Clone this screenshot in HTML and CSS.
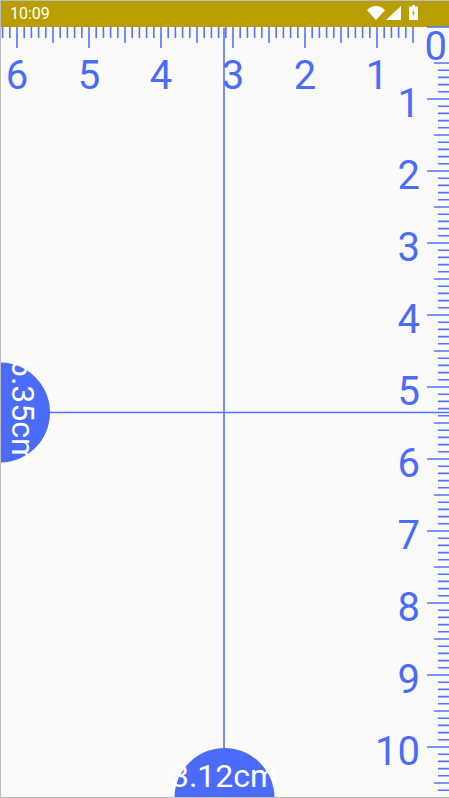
FILE: index.html
```html
<!DOCTYPE html>
<html lang="en">
<head>
<meta charset="utf-8">
<title>Ruler</title>
<link rel="stylesheet" href="styles.css">
</head>
<body>
<div class="frame">
  <header class="statusbar">
    <span class="clock">10:09</span>
    <div class="status-icons">
      <svg class="icon-wifi" viewBox="0 0 18 14"><path d="M0 4.200C2.400 1.600 5.500 0 9 0s6.600 1.600 9 4.200L9 14z"/></svg>
      <svg class="icon-signal" viewBox="0 0 15 14"><path d="M15 0v14H0z"/></svg>
      <svg class="icon-battery" viewBox="0 0 9 15"><path d="M3 0h3v1.500h3V15H0V1.500h3z"/><path class="bolt" d="M5 4 3 8.500h1.400L4 12l2-4.500H4.600z"/></svg>
    </div>
  </header>
  <svg class="stage" viewBox="1 27 448 770">
    <path id="ticks-minor" class="tick"/>
    <path id="ticks-major" class="tick"/>
    <line class="guide" x1="224" y1="28" x2="224" y2="748"/>
    <line class="guide" x1="50" y1="412.500" x2="449" y2="412.500"/>
    <circle class="knob" cx="0" cy="412.500" r="50"/>
    <circle class="knob" cx="224.500" cy="798" r="50"/>
    <text class="knob-label" transform="translate(12 412.500) rotate(90)">6.35cm</text>
    <text class="knob-label" x="224.500" y="787">3.12cm</text>
    <g class="labels-x">
      <text x="17" y="89">6</text>
      <text x="89" y="89">5</text>
      <text x="161" y="89">4</text>
      <text x="233" y="89">3</text>
      <text x="305" y="89">2</text>
      <text x="377" y="89">1</text>
    </g>
    <text class="label-zero" x="447" y="60">0</text>
    <g class="labels-y">
      <text x="420" y="117">1</text>
      <text x="420" y="189">2</text>
      <text x="420" y="261">3</text>
      <text x="420" y="333">4</text>
      <text x="420" y="405">5</text>
      <text x="420" y="477">6</text>
      <text x="420" y="549">7</text>
      <text x="420" y="621">8</text>
      <text x="420" y="693">9</text>
      <text x="420" y="765">10</text>
    </g>
  </svg>
</div>
<script src="ruler.js"></script>
</body>
</html>
```
FILE: styles.css
```css
html, body {
  margin: 0;
  height: 100%;
  background: #fafafa;
}
.frame {
  width: 449px;
  height: 798px;
  box-sizing: border-box;
  border-top: 1px solid #bdbdbd;
  border-left: 1px solid #bdbdbd;
  border-bottom: 1px solid #bdbdbd;
  display: flex;
  flex-direction: column;
  overflow: hidden;
  font-family: Roboto, sans-serif;
}
.statusbar {
  flex: 0 0 26px;
  background: #b89e00;
  display: flex;
  align-items: center;
  justify-content: space-between;
  padding: 0 31px 0 9px;
  color: #fff;
}
.clock {
  font-size: 16px;
  line-height: 26px;
}
.status-icons {
  display: flex;
  align-items: flex-start;
  height: 26px;
}
.status-icons svg {
  display: block;
  fill: #fff;
}
.icon-wifi {
  width: 18px;
  height: 14px;
  margin-top: 5px;
}
.icon-signal {
  width: 15px;
  height: 14px;
  margin: 5px 0 0 1px;
}
.icon-battery {
  width: 9px;
  height: 15px;
  margin: 4px 0 0 8px;
}
.status-icons .bolt {
  fill: #b89e00;
}
.stage {
  flex: 1;
  display: block;
  width: 448px;
  min-height: 0;
  overflow: visible;
}
.tick {
  fill: none;
  stroke: #5473fd;
  stroke-width: 1.6;
}
.guide {
  stroke: #5473fd;
  stroke-width: 1.6;
}
.knob {
  fill: #4b6bfb;
}
.knob-label {
  fill: #fff;
  font-size: 32px;
  text-anchor: middle;
}
.labels-x text,
.labels-y text,
.label-zero {
  fill: #4b6bfb;
  font-size: 40px;
}
.labels-x text {
  text-anchor: middle;
}
.labels-y text,
.label-zero {
  text-anchor: end;
}
```
FILE: ruler.js
```js
// Millimetre ticks: one cm is 72px, one mm is 7.2px.
(function () {
  var minor = '';
  var major = '';
  var k, x, y, len, mm;

  for (k = -2; k <= 55; k++) {
    x = (17 + 7.2 * k).toFixed(1);
    mm = ((k % 10) + 10) % 10;
    len = mm === 0 ? 21 : mm === 5 ? 16 : 11;
    var seg = 'M' + x + ' 27v' + len;
    if (mm === 0) { major += seg; } else { minor += seg; }
  }

  for (k = 0; k <= 106; k++) {
    if (k >= 1 && k <= 4) { continue; }
    y = (27 + 7.2 * k).toFixed(1);
    mm = k % 10;
    len = mm === 0 ? 22 : mm === 5 ? 15 : 11;
    var seg2 = 'M' + (449 - len) + ' ' + y + 'h' + len;
    if (mm === 0) { major += seg2; } else { minor += seg2; }
  }

  document.getElementById('ticks-minor').setAttribute('d', minor);
  document.getElementById('ticks-major').setAttribute('d', major);
})();
```
